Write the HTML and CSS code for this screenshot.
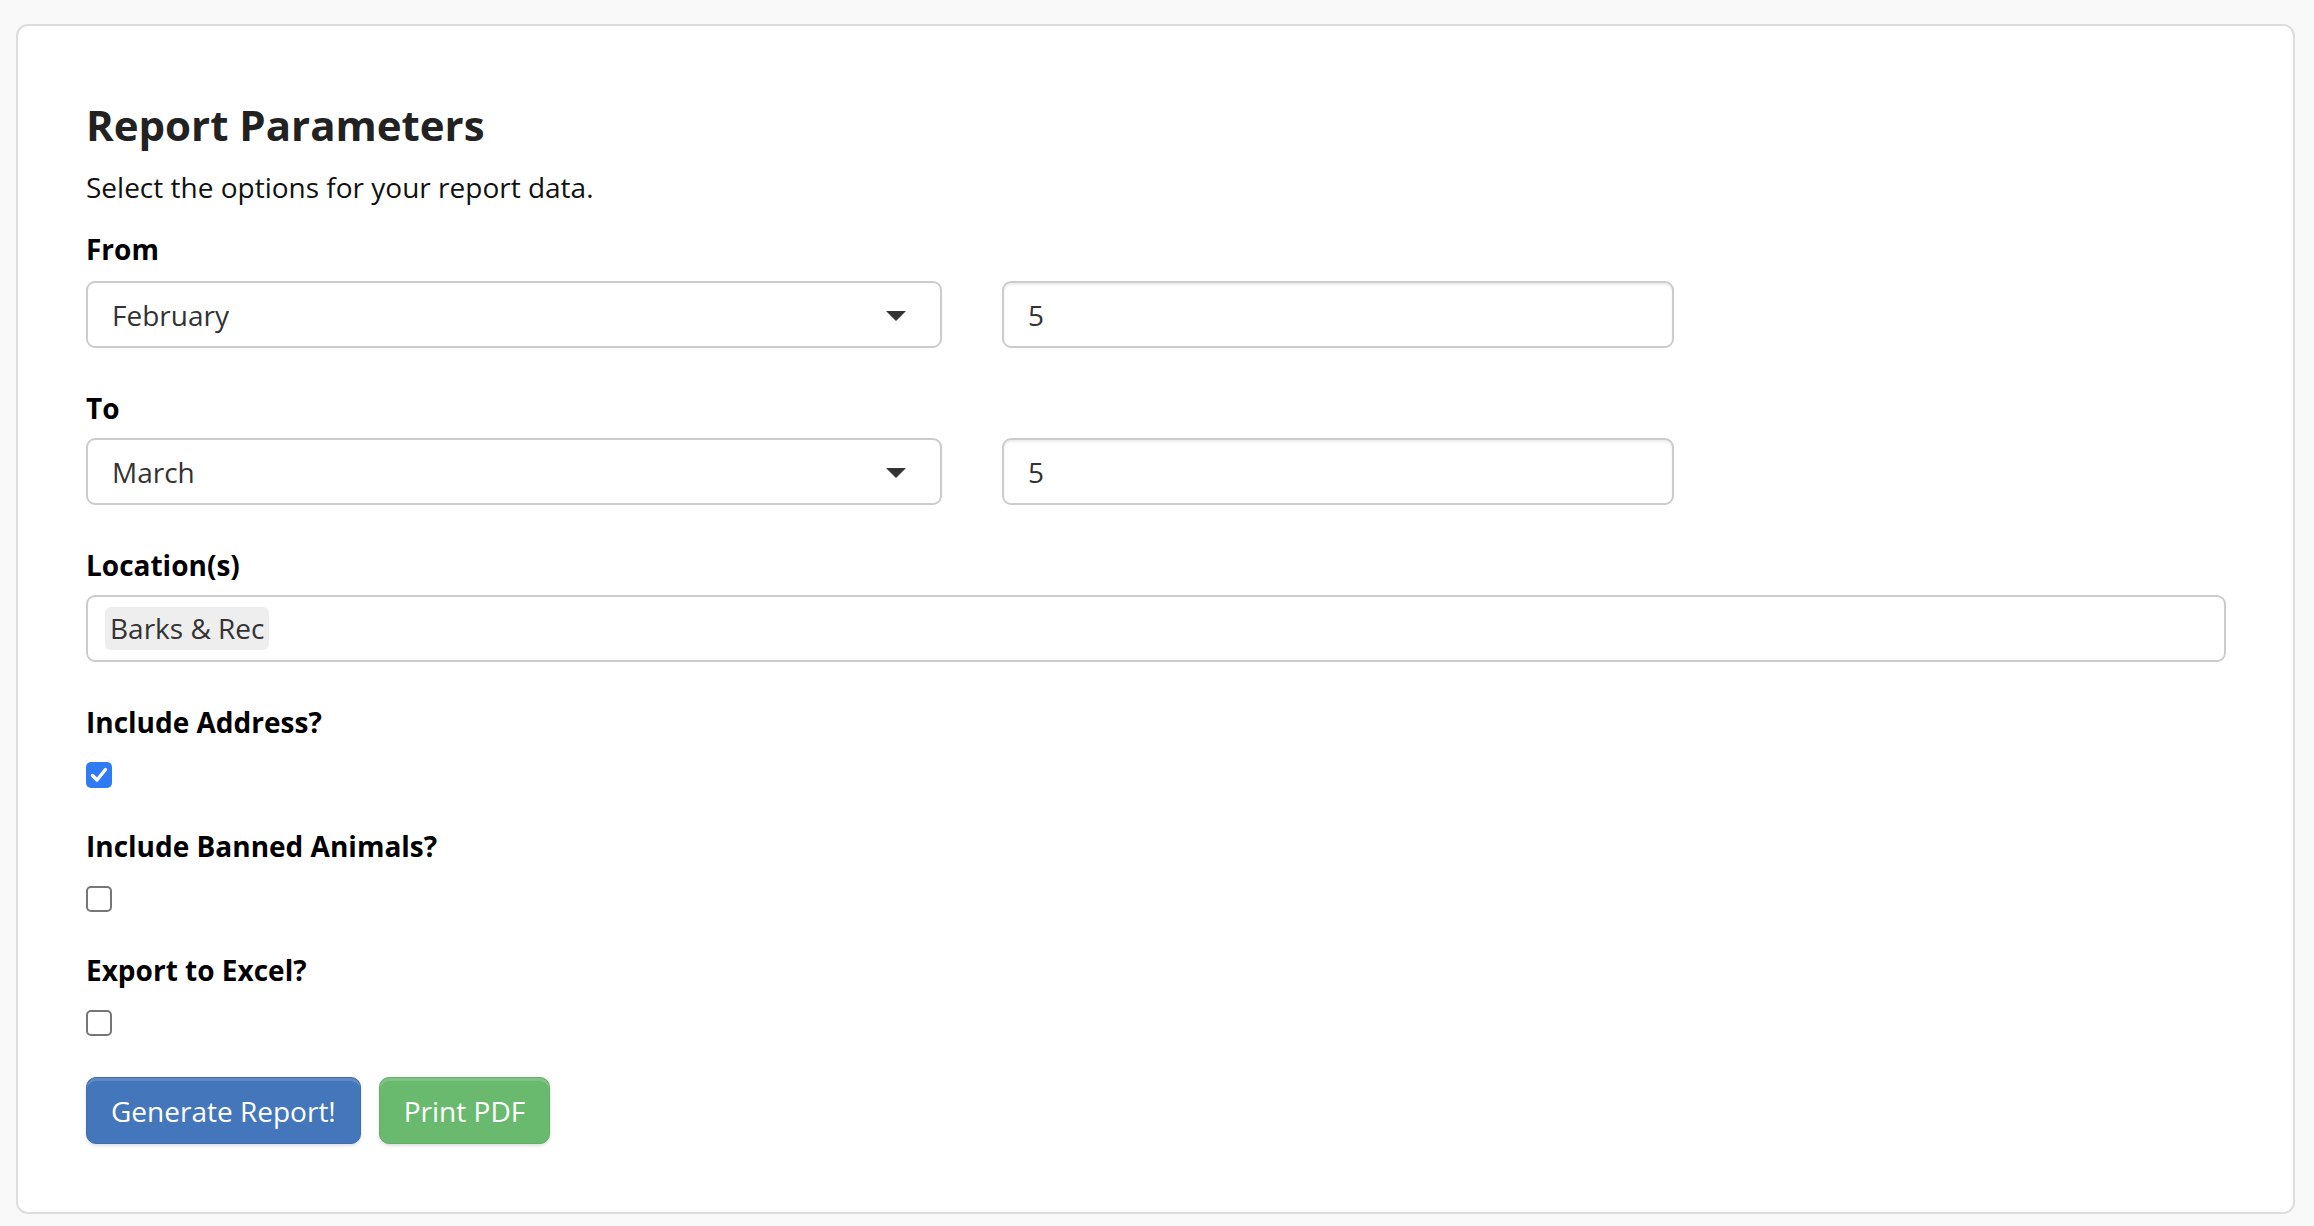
FILE: index.html
```html
<!DOCTYPE html>
<html lang="en">
<head>
<meta charset="utf-8">
<title>Report Parameters</title>
<link rel="stylesheet" href="styles.css">
</head>
<body>
<div class="page">
  <div class="card">
    <h2 class="title">Report Parameters</h2>
    <p class="subtitle">Select the options for your report data.</p>

    <div class="group first">
      <label class="label">From</label>
      <div class="date-row">
        <div class="select">
          <span>February</span>
          <svg class="caret" width="20" height="10" viewBox="0 0 20 10"><path d="M0 0H20L10 10Z" fill="#333"/></svg>
        </div>
        <input class="input day" type="text" value="5">
      </div>
    </div>

    <div class="group">
      <label class="label">To</label>
      <div class="date-row">
        <div class="select">
          <span>March</span>
          <svg class="caret" width="20" height="10" viewBox="0 0 20 10"><path d="M0 0H20L10 10Z" fill="#333"/></svg>
        </div>
        <input class="input day" type="text" value="5">
      </div>
    </div>

    <div class="group">
      <label class="label">Location(s)</label>
      <div class="tags-input">
        <span class="tag">Barks &amp; Rec</span>
      </div>
    </div>

    <div class="group check-group">
      <label class="label">Include Address?</label>
      <div class="check-row">
        <span class="checkbox checked">
          <svg width="18" height="16" viewBox="0 0 18 16"><path d="M2.5 8.5L7 13L15.5 2.5" fill="none" stroke="#fff" stroke-width="3.4" stroke-linecap="round" stroke-linejoin="round"/></svg>
        </span>
      </div>
    </div>

    <div class="group check-group">
      <label class="label">Include Banned Animals?</label>
      <div class="check-row">
        <span class="checkbox"></span>
      </div>
    </div>

    <div class="group check-group last">
      <label class="label">Export to Excel?</label>
      <div class="check-row">
        <span class="checkbox"></span>
      </div>
    </div>

    <div class="actions">
      <button class="btn btn-primary" type="button">Generate Report!</button>
      <button class="btn btn-success" type="button">Print PDF</button>
    </div>
  </div>
</div>
</body>
</html>
```

FILE: styles.css
```css
html, body {
  margin: 0;
  padding: 0;
  background: #f9f9f9;
}

body {
  font-family: "Open Sans", "Liberation Sans", sans-serif;
  color: #111;
}

.page {
  padding: 24px 19px 13px 16px;
}

.card {
  background: #fff;
  border: 2px solid #dddddd;
  border-radius: 12px;
  padding: 75px 67px 68px 68px;
}

.title {
  margin: 0;
  font-size: 42px;
  line-height: 48px;
  font-weight: 700;
  color: #222;
}

.subtitle {
  margin: 18px 0 0;
  font-size: 28px;
  line-height: 40px;
  color: #111;
}

.group {
  margin-top: 40px;
}

.group.first {
  margin-top: 22px;
}

.group.first .label {
  margin-bottom: 12px;
}

.label {
  display: block;
  font-size: 28px;
  line-height: 40px;
  font-weight: 700;
  color: #000;
  margin-bottom: 10px;
}

.date-row {
  display: flex;
  gap: 60px;
}

.select,
.input,
.tags-input {
  box-sizing: border-box;
  height: 67px;
  border: 2px solid #cccccc;
  border-radius: 9px;
  background: #fff;
  font-family: "Open Sans", "Liberation Sans", sans-serif;
  font-size: 28px;
  color: #333;
}

.select {
  width: 856px;
  display: flex;
  align-items: center;
  justify-content: space-between;
  padding: 0 34px 0 24px;
}

.caret {
  display: block;
  margin-top: 2px;
}

.input {
  width: 672px;
  padding: 0 24px;
  box-shadow: inset 0 2px 2px rgba(0, 0, 0, 0.075);
  outline: none;
}

.tags-input {
  display: flex;
  align-items: center;
  padding: 0 17px;
}

.tag {
  background: #eeeeee;
  border-radius: 6px;
  padding: 0 4px 0 5px;
  line-height: 43px;
  color: #333;
}

.check-row {
  height: 38px;
  padding-top: 10px;
  box-sizing: border-box;
}

.check-group + .check-group {
  margin-top: 36px;
}

.checkbox {
  box-sizing: border-box;
  display: flex;
  align-items: center;
  justify-content: center;
  width: 26px;
  height: 26px;
  border: 2px solid #767676;
  border-radius: 5px;
  background: #fff;
}

.checkbox.checked {
  border: none;
  background: #2f7bf5;
}

.actions {
  display: flex;
  gap: 18px;
  margin-top: 39px;
}

.btn {
  height: 67px;
  padding: 0 24px;
  border-radius: 10px;
  font-family: "Open Sans", "Liberation Sans", sans-serif;
  font-size: 28px;
  color: #fff;
  cursor: pointer;
  box-shadow: inset 0 3px 0 rgba(255, 255, 255, 0.15), 0 2px 3px rgba(0, 0, 0, 0.12);
}

.btn-primary {
  background: #4476bb;
  border: 1px solid #3e6db0;
}

.btn-success {
  background: #69ba6e;
  border: 1px solid #62b067;
}
```
